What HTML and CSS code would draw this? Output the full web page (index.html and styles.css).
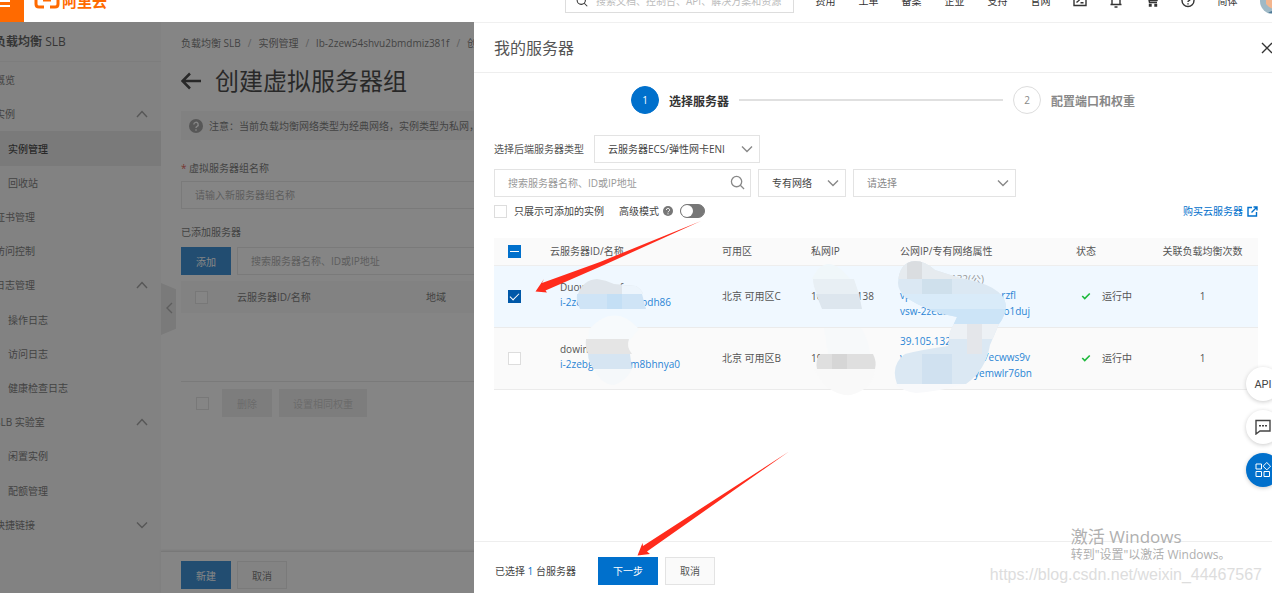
FILE: index.html
```
<!DOCTYPE html>
<html lang="zh-CN">
<head>
<meta charset="utf-8">
<title>负载均衡 SLB</title>
<link rel="stylesheet" href="styles.css">
</head>
<body>
<svg class="defs" aria-hidden="true">
  <symbol id="up" viewBox="0 0 12 12"><path d="M1 9l5-5.500 5 5.500"/></symbol>
  <symbol id="down" viewBox="0 0 12 12"><path d="M1 3.500l5 5 5-5"/></symbol>
  <symbol id="search" viewBox="0 0 16 16"><circle cx="7" cy="7" r="5.500"/><path d="M11 11l4 4"/></symbol>
  <symbol id="help" viewBox="0 0 14 14"><circle cx="7" cy="7" r="7" fill="currentColor" stroke="none"/><path class="q" d="M4.800 5.500a2.200 2.200 0 1 1 3.300 1.900q-1.100.6-1.100 1.500M7 10.200v1.500"/></symbol>
  <symbol id="tick" viewBox="0 0 12 12"><path d="M1.500 6l3 3 6-6"/></symbol>
</svg>
<div class="app">
  <header class="topbar">
    <button class="menu" aria-label="菜单"><span></span><span></span><span></span></button>
    <a class="logo" href="#">
      <svg width="26" height="18" viewBox="0 0 26 18"><path d="M10 2H5Q2 2 2 5v8q0 3 3 3h5M16 2h5q3 0 3 3v8q0 3-3 3h-5M9 9h8" fill="none" stroke="currentColor" stroke-width="3"/></svg>
      <span>阿里云</span>
    </a>
    <label class="topsearch">
      <svg class="ico" width="12" height="12"><use href="#search"/></svg>
      <input type="text" aria-label="搜索" placeholder="搜索文档、控制台、API、解决方案和资源">
    </label>
    <nav class="topnav">
      <a href="#">费用</a><a href="#">工单</a><a href="#">备案</a><a href="#">企业</a><a href="#">支持</a><a href="#">官网</a>
      <svg class="ico" width="14" height="14" viewBox="0 0 14 14"><path d="M1 1h12v10.500H1zM3.500 4l2.500 2.300-2.500 2.300M7.500 8.800h3"/></svg>
      <svg class="ico" width="14" height="14" viewBox="0 0 14 14"><path d="M3 10.500V6a4 4 0 0 1 8 0v4.500M1.500 10.500h11M5.500 13h3"/></svg>
      <svg class="ico" width="14" height="14" viewBox="0 0 14 14"><path d="M1 1h2l1.500 7.500h7.500M4 3h9l-1 3.500H5z"/><path d="M4.500 10.500h1.500v1.500h-1.500zM10 10.500h1.500v1.500h-1.500z" fill="currentColor"/></svg>
      <svg class="ico" width="14" height="14" viewBox="0 0 14 14"><circle cx="7" cy="6.500" r="6"/><path d="M5 5a2 2 0 1 1 3 1.700q-1 .5-1 1.300M7 9.300v1.200"/></svg>
      <a href="#">简体</a>
      <svg width="26" height="26" viewBox="0 0 26 26"><circle cx="13" cy="13" r="13" fill="#9fb9c6"/><path d="M6 8q7-9 14 0v8q-7 9-14 0z" fill="#f3b58e"/><path d="M5 9q8-13 16 0l-8-3z" fill="#52433d"/><path d="M8 25q5-4 10 0z" fill="#4e7896"/></svg>
    </nav>
  </header>

  <div class="body">
    <aside class="side">
      <h2>负载均衡 <b>SLB</b></h2>
      <nav class="tree">
        <a href="#">概览</a>
        <a href="#">实例<svg class="ico"><use href="#up"/></svg></a>
        <a href="#" class="sub on">实例管理</a>
        <a href="#" class="sub">回收站</a>
        <a href="#">证书管理</a>
        <a href="#">访问控制</a>
        <a href="#">日志管理<svg class="ico"><use href="#up"/></svg></a>
        <a href="#" class="sub">操作日志</a>
        <a href="#" class="sub">访问日志</a>
        <a href="#" class="sub">健康检查日志</a>
        <a href="#">SLB 实验室<svg class="ico"><use href="#up"/></svg></a>
        <a href="#" class="sub">闲置实例</a>
        <a href="#" class="sub">配额管理</a>
        <a href="#">快捷链接<svg class="ico"><use href="#down"/></svg></a>
      </nav>
    </aside>

    <main class="page">
      <button class="fold" aria-label="收起"><svg class="ico" width="8" height="12" viewBox="0 0 8 12"><path d="M7 1L2 6l5 5"/></svg></button>
      <div class="pagebody">
        <div class="crumb"><a href="#">负载均衡 SLB</a><i>/</i><a href="#">实例管理</a><i>/</i><a href="#">lb-2zew54shvu2bmdmiz381f</a><i>/</i><span>创建虚拟服务器组</span></div>
        <h1><svg class="ico back" width="21" height="18" viewBox="0 0 21 18"><path d="M20 9H2M9 1.500L1.500 9 9 16.500"/></svg>创建虚拟服务器组</h1>
        <div class="notice"><svg class="ico" width="14" height="14"><use href="#help"/></svg><span>注意：当前负载均衡网络类型为经典网络，实例类型为私网，请添加后端服务器</span></div>
        <label class="lab" for="gname"><em>*</em> 虚拟服务器组名称</label>
        <input class="box" id="gname" type="text" placeholder="请输入新服务器组名称">
        <p class="lab second">已添加服务器</p>
        <div class="row">
          <button class="btn primary">添加</button>
          <input class="box grow" type="text" aria-label="搜索服务器" placeholder="搜索服务器名称、ID或IP地址">
        </div>
        <table class="added">
          <thead><tr><th class="pick"><input type="checkbox" aria-label="全选"></th><th class="id">云服务器ID/名称</th><th>地域</th></tr></thead>
        </table>
        <div class="row batch">
          <input type="checkbox" aria-label="选择全部">
          <button class="btn off" disabled>删除</button>
          <button class="btn off" disabled>设置相同权重</button>
        </div>
      </div>
      <footer class="pagefoot"><button class="btn primary">新建</button><button class="btn">取消</button></footer>
    </main>

    <div class="mask"></div>

    <section class="drawer">
      <header><h2>我的服务器</h2><button aria-label="关闭"><svg class="ico" width="12" height="12" viewBox="0 0 12 12"><path d="M1 1l10 10M11 1L1 11"/></svg></button></header>
      <div class="inner">
        <ol class="steps">
          <li class="cur"><span>1</span><b>选择服务器</b></li>
          <li class="bar"></li>
          <li><span>2</span><b>配置端口和权重</b></li>
        </ol>
        <div class="row type">
          <label for="kind">选择后端服务器类型</label>
          <div class="sel kind"><select id="kind"><option>云服务器ECS/弹性网卡ENI</option></select><svg class="ico"><use href="#down"/></svg></div>
        </div>
        <div class="row filter">
          <div class="sel find"><input type="text" aria-label="搜索" placeholder="搜索服务器名称、ID或IP地址"><svg class="ico"><use href="#search"/></svg></div>
          <div class="sel net"><select aria-label="网络"><option>专有网络</option></select><svg class="ico"><use href="#down"/></svg></div>
          <div class="sel pickone"><select aria-label="请选择"><option>请选择</option></select><svg class="ico"><use href="#down"/></svg></div>
        </div>
        <div class="row opts">
          <label class="only"><input type="checkbox">只展示可添加的实例</label>
          <label class="adv">高级模式<svg class="ico" width="10" height="10"><use href="#help"/></svg><input class="switch" type="checkbox"></label>
          <a class="buy" href="#">购买云服务器<svg class="ico" width="11" height="11" viewBox="0 0 11 11"><path d="M5 1.500H1v8.500h8.500V6M4.500 6.500L10 1M6.500 1H10v3.500"/></svg></a>
        </div>
        <table class="servers">
          <colgroup><col class="c1"><col class="c2"><col class="c3"><col class="c4"><col class="c5"><col class="c6"><col class="c7"></colgroup>
          <thead><tr><th><input type="checkbox" class="some" aria-label="全选"></th><th>云服务器ID/名称</th><th>可用区</th><th>私网IP</th><th>公网IP/专有网络属性</th><th>状态</th><th class="num">关联负载均衡次数</th></tr></thead>
          <tbody>
            <tr class="picked">
              <td><input type="checkbox" checked aria-label="选择"></td>
              <td class="name"><div class="cut w1"><span>Duow</span><span>f</span></div><a href="#" class="cut w2"><span>i-2ze</span><span>odh86</span></a></td>
              <td>北京 可用区C</td>
              <td><div class="cut w1"><span>10</span><span>138</span></div></td>
              <td class="pub"><div class="cut w3 faded"><span></span><span>132(公)</span></div><a href="#" class="cut w4"><span>vpc</span><span>rzfl</span></a><a href="#" class="cut w5"><span>vsw-2zeda</span><span>o1duj</span></a></td>
              <td><div class="state"><svg class="ico" width="10" height="10"><use href="#tick"/></svg>运行中</div></td>
              <td class="num">1</td>
            </tr>
            <tr>
              <td><input type="checkbox" aria-label="选择"></td>
              <td class="name"><div>dowin</div><a href="#" class="cut w6"><span>i-2zebg</span><span>m8bhnya0</span></a></td>
              <td>北京 可用区B</td>
              <td><div>19</div></td>
              <td class="pub"><a href="#" class="cut">39.105.132</a><a href="#" class="cut w5"><span>vpc</span><span>7ecwws9v</span></a><a href="#" class="cut w7"><span>vs</span><span>tyemwlr76bn</span></a></td>
              <td><div class="state"><svg class="ico" width="10" height="10"><use href="#tick"/></svg>运行中</div></td>
              <td class="num">1</td>
            </tr>
          </tbody>
        </table>
      </div>
      <footer><span>已选择 <b>1</b> 台服务器</span><button class="btn primary next">下一步</button><button class="btn">取消</button></footer>
    </section>
  </div>
</div>

<svg class="marks" width="1272" height="593" viewBox="0 0 1272 593" aria-hidden="true">
  <defs><clipPath id="pub"><path d="M898 283Q899 262 915 261Q925 261 935 270L960 278Q1003 285 1006 305Q1005 317 999 324L990 345Q986 370 966 384H897Q890 365 905 354Q920 350 948 346L950 332L957 317Q930 313 905 297Q898 290 898 283Z"/></clipPath></defs>
  <path d="M578 294Q583 280 597 279Q606 280 614 284L636 286Q642 290 643 294Z" fill="#dfe5eb"/>
  <path d="M622 285l14 1q6 4 7 8h-21z" fill="#edf5fc"/>
  <path d="M577 294H642L646 309H580Q576 302 577 294Z" fill="#cfe4f6"/>
  <path d="M607 294h15v15h-15z" fill="#c4dff5"/>
  <path d="M589 329Q615 302 639 329L629 341H588Z" fill="#f7fafc"/>
  <path d="M586 339H629Q626 347 632 354H588Q585 347 586 339Z" fill="#e5e5e5"/>
  <path d="M588 354H630L632 369H594Q588 362 588 354Z" fill="#d6e5f2"/>
  <path d="M594 369h38q-6 12-18 16-12 0-20-16z" fill="#f5f8fa"/>
  <path d="M812 279q14-30 38 0z" fill="#f0f7fa"/>
  <path d="M813 279h41l5 15h-42q-4-8-4-15z" fill="#e8eff4"/>
  <path d="M816 294h43l3 15h-40z" fill="#dde6ee"/>
  <path d="M824 328h37q8 12 9 26h-42z" fill="#f7f9fa"/>
  <path d="M820 354h53q4 8 2 15h-58q-2-8 3-15z" fill="#dfdfdf"/>
  <path d="M832 354h15v15h-15z" fill="#d6d6d6"/>
  <path d="M814 369h61q-2 20-24 26-22 2-37-26z" fill="#f9f9f9"/>
  <path d="M895 384h71q-30 8-50 9-12-1-21-9z" fill="#f8f9fb"/>
  <g clip-path="url(#pub)">
    <path d="M890 260h120v128H890z" fill="#dbe8f3"/>
    <path d="M890 260h120v19H890z" fill="#e6ebef"/>
    <path d="M907 260h15v19h-15z" fill="#dadde0"/>
    <path d="M922 279h30v15h-30z" fill="#cfe0ec"/>
    <path d="M890 294h120v15H890z" fill="#d9ebf9"/>
    <path d="M930 309h80v15h-80z" fill="#cce4f7"/>
    <path d="M940 324h60v15h-60z" fill="#edf1f5"/>
    <path d="M967 324h15v30h-15z" fill="#e4e6ea"/>
    <path d="M922 354h30v30h-30z" fill="#d0e1f0"/>
  </g>
  <path d="M701 221L600 262 542 283 544 279 535.500 291.500 547 292.500 545.500 290.500 604 265z" fill="#ff2b1c"/>
  <path d="M789 451.500L643 546l-.500-3-5 12.500 12.500-1.500-3-2.500z" fill="#ff2b1c"/>
</svg>

<div class="float">
  <button class="api">API</button>
  <button aria-label="反馈"><svg class="ico" width="16" height="16" viewBox="0 0 16 16"><path d="M1 1.500h14v10.500H5L1 15zM4 6.800h2M7 6.800h2M10 6.800h2"/></svg></button>
  <button class="blue" aria-label="应用"><svg class="ico" width="16" height="16" viewBox="0 0 16 16"><path d="M1 2h5.500v5H1zM1 9.500h5.500v5H1zM9 9.500h5.500v5H9zM11.800.5l3.700 3.700-3.700 3.700-3.700-3.700z"/></svg></button>
</div>
<div class="stamp">
  <div class="win"><strong>激活 Windows</strong><span>转到"设置"以激活 Windows。</span></div>
  <span class="url">https://blog.csdn.net/weixin_44467567</span>
</div>
</body>
</html>
```
FILE: styles.css
```
* { box-sizing: border-box; }
body, button, input, select { font-family: "Open Sans", "Noto Sans CJK SC", sans-serif; font-size: 10px; }
body { margin: 0; height: 100vh; overflow: hidden; position: relative; line-height: 16px; color: #555; background: #fff; }
a { color: inherit; text-decoration: none; }
h1, h2, p, ol { margin: 0; padding: 0; font-weight: 400; }
ol { list-style: none; }
i, em { font-style: normal; }
button { border: 0; background: none; padding: 0; color: inherit; }
.defs { position: absolute; width: 0; height: 0; }
.ico { fill: none; stroke: currentColor; stroke-width: 1.400; flex: none; }
.q { stroke: #fff; }

/* the console window starts slightly above and left of the viewport */
.app { display: flex; flex-direction: column; height: calc(100vh + 20px); margin: -20px 0 0 -12px; }

.topbar { display: flex; align-items: center; height: 42px; flex: none; background: #fff; color: #333; }
.menu { align-self: stretch; width: 36px; background: #ff6a00; display: flex; flex-direction: column; justify-content: center; align-items: center; gap: 3px; }
.menu span { width: 16px; height: 2px; margin-right: 8px; background: #fff; }
.logo { display: flex; align-items: center; gap: 2px; margin-left: 10px; color: #ff6a00; font-size: 15px; font-weight: 700; }
.logo svg { margin-top: -2px; }
.topsearch { display: flex; align-items: center; gap: 8px; width: 229px; height: 24px; margin-left: auto; padding: 0 10px; border: 1px solid #ddd; }
.topsearch input { border: 0; padding: 0; flex: 1; min-width: 0; outline: 0; }
.topnav { display: flex; align-items: center; gap: 22px; padding-left: 21px; margin-right: -14px; }
.topnav a { min-width: 21px; text-align: center; }
::placeholder { color: #999; opacity: 1; }
.topsearch ::placeholder { color: #bbb; }

.body { flex: 1; display: flex; min-height: 0; position: relative; }
.mask { position: absolute; inset: 0; background: rgba(55, 55, 55, 0.610); }

.side { width: 173px; flex: none; background: #f6f6f6; }
.side h2 { height: 40px; padding: 12px 0 0 6px; font-size: 12px; font-weight: 700; color: #333; border-bottom: 1px solid #ebebeb; }
.side h2 b { font-weight: 400; }
.tree { display: grid; grid-auto-rows: 1fr; height: 480px; padding-top: 1px; }
.tree a { display: flex; align-items: center; justify-content: space-between; padding: 0 13px 0 7px; }
.tree a.sub { padding-left: 20px; }
.tree .on { background: #e2e2e2; color: #111; font-weight: 500; }
.tree .ico { width: 12px; height: 12px; color: #888; }

.page { flex: 1; min-width: 0; display: flex; flex-direction: column; position: relative; background: #fff; }
.fold { position: absolute; left: 0; top: 261px; width: 15px; height: 52px; background: #e2e2e2; color: #999; clip-path: polygon(0 0, 100% 12%, 100% 88%, 0 100%); }
.pagebody { flex: 1; padding: 13px 20px 0; }
.crumb { display: flex; gap: 7px; white-space: nowrap; }
.crumb i { color: #999; }
.page h1 { display: flex; align-items: center; gap: 13px; height: 44px; margin-top: 8px; font-size: 24px; line-height: 32px; color: #111; }
.back { stroke-width: 2.500; }
.notice { display: flex; align-items: center; gap: 6px; height: 29px; margin-top: 8px; padding: 0 8px; background: #f5f5f5; white-space: nowrap; }
.notice .ico { color: #888; }
.lab { display: block; margin-top: 20px; }
.lab.second { margin-top: 15px; }
.lab em { color: #d93026; }
.box { width: 100%; height: 28px; padding: 0 13px; border: 1px solid #e3e3e3; background: #fff; margin-top: 5px; outline: 0; display: block; }
.row { display: flex; align-items: center; }
.second + .row { margin-top: 7px; gap: 6px; }
.row .box { flex: 1; margin: 0; }
.btn { height: 28px; min-width: 50px; padding: 0 13px; border: 1px solid #e3e3e3; background: #fafafa; color: #555; }
.btn.primary { background: #0070cc; border-color: #0070cc; color: #fff; }
.btn.off { background: #ebebeb; border-color: #ebebeb; color: #bbb; }
input[type="checkbox"] { appearance: none; margin: 0; width: 13px; height: 13px; border: 1px solid #ddd; background: #fff; flex: none; display: grid; place-items: center; }
input[type="checkbox"]:checked:not(.switch) { background: #0058a8; border-color: #0058a8; }
input[type="checkbox"]:checked:not(.switch)::after { content: ""; width: 8px; height: 4px; margin-bottom: 2px; border: solid #fff; border-width: 0 0 1px 1px; transform: rotate(-45deg); }
input.some { background: #0070cc; border-color: #0070cc; }
input.some::after { content: ""; width: 9px; height: 1px; background: #fff; }
table { border-collapse: collapse; width: 100%; table-layout: fixed; }
th, td { padding: 0; text-align: left; font-weight: 400; }
.added { margin-top: 6px; }
.added tr { height: 32px; background: #f6f6f6; }
.added .pick { width: 56px; padding-left: 14px; }
.added .id { width: 189px; }
.batch { margin-top: 68px; padding: 7px 0 0 15px; border-top: 1px solid #e3e3e3; gap: 7px; }
.batch input { margin-right: 6px; }
.pagefoot { display: flex; gap: 6px; height: 42px; padding: 9px 20px 0; border-top: 1px solid #ddd; box-shadow: 0 -1px 2px #e6e6e6; }

.drawer { position: absolute; right: 0; top: 0; bottom: 0; width: 798px; background: #fff; display: flex; flex-direction: column; border-top: 1px solid #f0f0f0; }
.drawer > header { display: flex; align-items: center; justify-content: space-between; height: 50px; flex: none; padding-left: 20px; border-bottom: 1px solid #eee; }
.drawer h2 { font-size: 16px; color: #555; }
.drawer > header button { margin: 0 -1px 0 0; height: 12px; color: #333; }
.inner { flex: 1; padding: 13px 14px 0 20px; }
.steps { display: flex; align-items: center; gap: 10px; padding: 0 123px 0 137px; }
.steps li { display: flex; align-items: center; gap: 10px; font-size: 12px; color: #888; }
.steps b { padding-top: 3px; }
.steps .bar { flex: 1; height: 2px; background: #e0e0e0; }
.steps span { width: 28px; height: 28px; border: 1px solid #ddd; border-radius: 50%; font-size: 10px; display: grid; place-items: center; }
.steps .cur { color: #333; }
.steps .cur span { background: #0070cc; border-color: #0070cc; color: #fff; }
.type { margin-top: 21px; gap: 9px; }
.type label { min-width: 91px; }
.filter { margin-top: 6px; gap: 7px; }
.sel { position: relative; height: 28px; }
.sel select, .sel input { appearance: none; width: 100%; height: 100%; padding: 0 13px; border: 1px solid #e3e3e3; border-radius: 0; background: #fff; color: #444; outline: 0; }
.sel .ico { position: absolute; right: 7px; top: 8px; width: 12px; height: 12px; color: #888; pointer-events: none; }
.kind { width: 166px; }
.find { width: 257px; }
.find .ico { width: 15px; height: 15px; top: 6px; right: 6px; }
.net { width: 88px; }
.pickone { width: 163px; }
.sel.pickone select { color: #888; }
.opts { margin-top: 6px; }
.opts label { display: flex; align-items: center; color: #444; }
.only { gap: 7px; }
.adv { gap: 4px; margin-left: 15px; }
.adv .ico { color: #777; }
.adv .switch { width: 25px; height: 14px; margin-left: 3px; border-radius: 7px; background: #777; border-color: #777; place-items: center start; }
.switch::after { content: ""; width: 12px; height: 12px; border-radius: 50%; background: #fff; }
.buy { display: flex; align-items: center; gap: 4px; margin-left: auto; color: #0070cc; }
.servers { margin-top: 19px; }
.servers thead tr { height: 27px; background: #fafafa; border-bottom: 1px solid #eee; }
.servers tbody tr { height: 62px; background: #fafafa; border-bottom: 1px solid #ebebeb; }
.servers tbody tr.picked { background: #f0f8ff; }
.c1 { width: 56px; } .c2 { width: 172px; } .c3 { width: 89px; } .c4 { width: 89px; } .c5 { width: 176px; } .c6 { width: 72px; }
.servers th:first-child, .servers td:first-child { padding-left: 14px; }
.servers .name { padding: 0 0 2px 10px; line-height: 15px; }
.servers .pub { padding-bottom: 2px; }
.servers .num { text-align: center; padding-right: 1px; white-space: nowrap; }
.servers a { color: #2a85d5; }
.cut { display: flex; justify-content: space-between; white-space: nowrap; }
.w1 { width: 63px; } .w2 { width: 111px; } .w3 { width: 84px; } .w4 { width: 116px; } .w5 { width: 130px; } .w6 { width: 120px; } .w7 { width: 132px; }
.faded { color: #999; }
.state { display: flex; align-items: center; gap: 11px; padding-left: 5px; }
.state .ico { color: #1db93c; stroke-width: 2; }
.drawer > footer { display: flex; align-items: center; height: 52px; flex: none; padding: 6px 20px 0 21px; border-top: 1px solid #eee; color: #444; }
.drawer > footer b { font-weight: 400; color: #0070cc; }
.drawer > footer span { min-width: 83px; margin-right: 20px; }
.next { min-width: 60px; margin-right: 7px; }

.marks { position: absolute; left: 0; top: 0; pointer-events: none; }
.float { position: absolute; right: -8px; top: 367px; display: flex; flex-direction: column; gap: 9px; }
.float button { width: 34px; height: 34px; border-radius: 50%; background: #fff; color: #444; box-shadow: 0 1px 4px #ccc; display: grid; place-items: center; }
.float .api { font-family: "Roboto", sans-serif; font-size: 11px; }
.float .blue { background: #0070cc; color: #fff; }
.float .blue .ico { stroke-width: 1; }
.stamp { position: absolute; right: 10px; bottom: 6px; display: flex; flex-direction: column; color: #b0b0b0; pointer-events: none; }
.win { display: flex; flex-direction: column; padding-left: 81px; }
.win strong { font-size: 17px; line-height: 20px; font-weight: 400; }
.win span { font-size: 12px; line-height: 16px; }
.url { font-family: "Liberation Sans", sans-serif; font-size: 16px; line-height: 24px; color: #ddd; }
```
